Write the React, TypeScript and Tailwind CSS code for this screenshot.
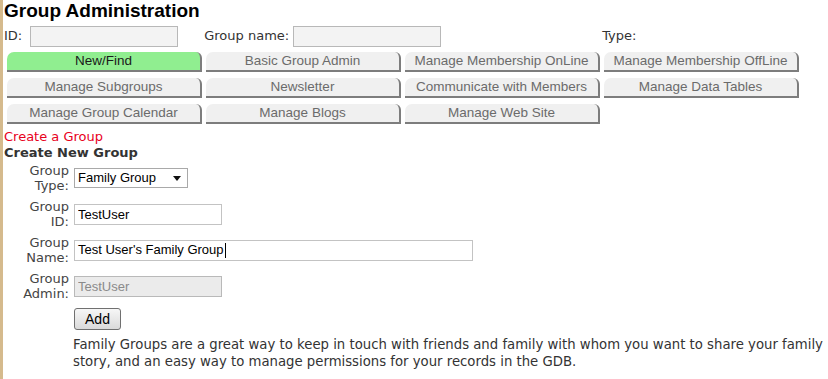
import React from 'react';

const tabs = [
  'New/Find',
  'Basic Group Admin',
  'Manage Membership OnLine',
  'Manage Membership OffLine',
  'Manage Subgroups',
  'Newsletter',
  'Communicate with Members',
  'Manage Data Tables',
  'Manage Group Calendar',
  'Manage Blogs',
  'Manage Web Site',
];

const verdana = { fontFamily: '"DejaVu Sans", Verdana, sans-serif' };
const arial = { fontFamily: '"Liberation Sans", Arial, sans-serif' };

function Label({ top, bottom }: { top: string; bottom: string }) {
  return (
    <div className="w-[65px] shrink-0 text-right text-[13px] leading-[15px] text-[#444]">
      {top}
      <br />
      {bottom}
    </div>
  );
}

export default function App() {
  return (
    <div className="min-h-screen w-[828px] border-l-[3px] border-[#d5ba8d] bg-white pl-[1px] text-[#333]" style={arial}>
      <h1 className="h-[22px] text-[19px] font-bold leading-[22px] text-black">Group Administration</h1>

      {/* search row */}
      <div className="mt-[3px] flex h-[22px] items-center text-[13px]" style={verdana}>
        <span>ID:</span>
        <input readOnly className="ml-[8px] h-[21px] w-[148px] border border-[#b8b8b8] bg-[#f3f3f3] outline-none" />
        <span className="ml-[26px]">Group name:</span>
        <input readOnly className="ml-[4px] h-[21px] w-[148px] border border-[#b8b8b8] bg-[#f3f3f3] outline-none" />
        <span className="ml-[161px]">Type:</span>
      </div>

      {/* tabs */}
      <div className="ml-[3px] mt-[5px] grid grid-cols-[repeat(4,195px)] gap-x-[4px] gap-y-[6px]">
        {tabs.map((tab, i) => (
          <div
            key={tab}
            className={
              'flex h-[20px] items-center justify-center rounded-tl-[7px] rounded-tr-[6px] border-r-2 border-b-2 border-[#7d7d7d] text-[13.5px] leading-none ' +
              (i === 0 ? 'bg-[#90ee90] text-[#1a1a1a]' : 'bg-[#f0f0f0] text-[#6b6b6b]')
            }
          >
            {tab}
          </div>
        ))}
      </div>

      <div className="mt-[5px] text-[13px] leading-[16px]" style={verdana}>
        <div className="text-[#e8001c]">Create a Group</div>
        <div className="font-bold text-[#333]">Create New Group</div>
      </div>

      {/* form */}
      <div className="mt-[2px] flex flex-col gap-[6px]" style={verdana}>
        <div className="flex items-center gap-[5px]">
          <Label top="Group" bottom="Type:" />
          <div
            className="flex h-[20px] w-[114px] items-center justify-between border border-[#a9a9a9] bg-white pl-[3px] pr-[6px] text-[13px] text-black"
            style={arial}
          >
            <span>Family Group</span>
            <svg width="8" height="5" viewBox="0 0 8 5">
              <path d="M0 0h8L4 5z" fill="#111" />
            </svg>
          </div>
        </div>

        <div className="flex items-center gap-[5px]">
          <Label top="Group" bottom="ID:" />
          <input
            readOnly
            value="TestUser"
            className="h-[21px] w-[148px] border border-[#c3c3c3] bg-white px-[3px] text-[13px] text-black outline-none"
            style={arial}
          />
        </div>

        <div className="flex items-center gap-[5px]">
          <Label top="Group" bottom="Name:" />
          <div
            className="flex h-[21px] w-[399px] items-center border border-[#c3c3c3] bg-white px-[3px] text-[13px] text-black"
            style={arial}
          >
            <span>Test User's Family Group</span>
            <span className="ml-[1px] h-[15px] w-[1px] bg-black" />
          </div>
        </div>

        <div className="flex items-center gap-[5px]">
          <Label top="Group" bottom="Admin:" />
          <input
            readOnly
            disabled
            value="TestUser"
            className="h-[21px] w-[148px] border border-[#b9b9b9] bg-[#ebebeb] px-[3px] text-[13px] text-[#8a8a8a] outline-none"
            style={arial}
          />
        </div>
      </div>

      <div className="ml-[70px] mt-[6px]">
        <button
          className="h-[22px] w-[47px] rounded-[3px] border border-[#707070] bg-gradient-to-b from-[#f7f7f7] to-[#dadada] text-[14px] text-black"
          style={arial}
        >
          Add
        </button>
      </div>

      <p className="ml-[69px] mt-[5px] text-[13.25px] leading-[17px] text-[#333]" style={verdana}>
        Family Groups are a great way to keep in touch with friends and family with whom you want to share your family
        <br />
        story, and an easy way to manage permissions for your records in the GDB.
      </p>
    </div>
  );
}
